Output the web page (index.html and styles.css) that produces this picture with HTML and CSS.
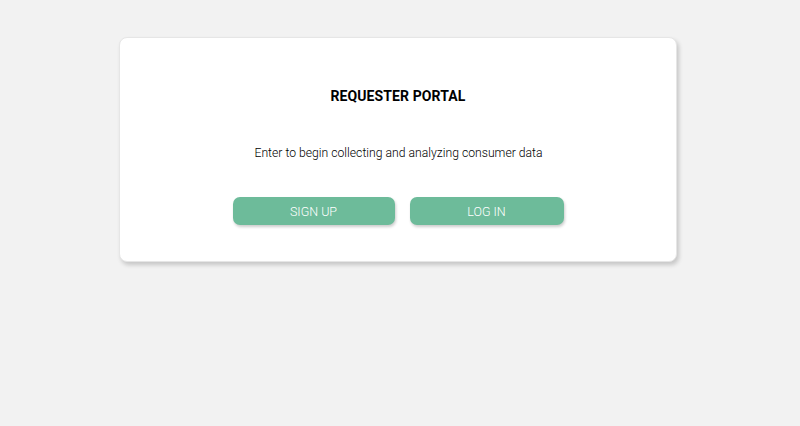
FILE: index.html
```html
<!DOCTYPE html>
<html>
<head>
<meta charset="utf-8">
<link rel="stylesheet" href="styles.css">
</head>
<body>
<div class="card">
  <h1 class="title">REQUESTER PORTAL</h1>
  <p class="subtitle">Enter to begin collecting and analyzing consumer data</p>
  <div class="actions">
    <button class="btn btn-signup">SIGN UP</button>
    <button class="btn btn-login">LOG IN</button>
  </div>
</div>
</body>
</html>
```
FILE: styles.css
```css
html, body {
  margin: 0;
  padding: 0;
  background: #f2f2f2;
  font-family: Roboto, "Liberation Sans", sans-serif;
}
body {
  padding-top: 37px;
  height: 426px;
  box-sizing: border-box;
}
.card {
  margin-left: 119px;
  width: 558px;
  height: 225px;
  box-sizing: border-box;
  background: #fff;
  border-radius: 8px;
  border: 1px solid #e6e6e6;
  box-shadow: 2px 3px 4px rgba(0,0,0,0.18);
  display: flex;
  flex-direction: column;
  align-items: center;
  padding-top: 50px;
}
.title {
  margin: 0;
  font-size: 14px;
  font-weight: 700;
  line-height: 16px;
  color: #000;
  letter-spacing: 0.1px;
}
.subtitle {
  margin: 41px 0 0 1px;
  font-size: 12.2px;
  line-height: 16px;
  font-weight: 300;
  color: #000;
}
.actions {
  display: flex;
  gap: 15px;
  margin-top: 36px;
}
.btn {
  height: 28px;
  border: none;
  border-radius: 7px;
  background: #6dbb9a;
  color: #fff;
  font-family: Roboto, "Liberation Sans", sans-serif;
  font-size: 12.5px;
  font-weight: 300;
  padding: 0;
  box-shadow: 1px 2px 3px rgba(0,0,0,0.2);
}
.btn-signup { width: 162px; }
.btn-login { width: 154px; }
```
